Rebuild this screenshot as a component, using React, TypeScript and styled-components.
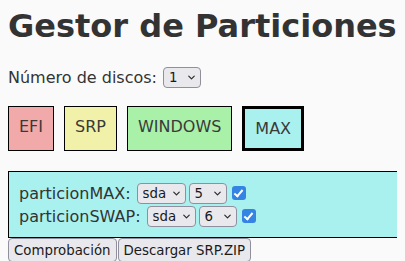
import { ChevronDown } from 'lucide-react';
import styled, { createGlobalStyle } from 'styled-components';

const partitions = [
  { name: 'EFI', color: '#f1a9a9', selected: false },
  { name: 'SRP', color: '#f1f1a9', selected: false },
  { name: 'WINDOWS', color: '#a9f1a9', selected: false },
  { name: 'MAX', color: '#a9f1ef', selected: true },
];

const rows = [
  { label: 'particionMAX:', disk: 'sda', num: '5' },
  { label: 'particionSWAP:', disk: 'sda', num: '6' },
];

const GlobalStyle = createGlobalStyle`
  html {
    overflow: hidden;
  }
  body {
    margin: 8px;
    background: #fafafa;
    color: #333;
    font-family: 'DejaVu Sans', 'Noto Sans', sans-serif;
    font-size: 16px;
  }
`;

const SelectWrap = ({ value, options, width }: { value: string; options: string[]; width: number }) => (
  <SelectBox style={{ width }}>
    <Select defaultValue={value}>
      {options.map((o) => (
        <option key={o}>{o}</option>
      ))}
    </Select>
    <Chevron size={11} strokeWidth={2.6} />
  </SelectBox>
);

const App = () => {
  return (
    <>
      <GlobalStyle />
      <Title>Gestor de Particiones</Title>
      <DiscRow>
        Número de discos:
        <SelectWrap value='1' options={['1', '2', '3']} width={38} />
      </DiscRow>
      <PartList>
        {partitions.map((p) => (
          <Part key={p.name} $color={p.color} $selected={p.selected}>
            {p.name}
          </Part>
        ))}
      </PartList>
      <Panel>
        {rows.map((r) => (
          <Row key={r.label}>
            <Label>{r.label}</Label>
            <SelectWrap value={r.disk} options={['sda', 'sdb']} width={49} />
            <SelectWrap value={r.num} options={['1', '2', '3', '4', '5', '6', '7']} width={38} />
            <Check type='checkbox' defaultChecked />
          </Row>
        ))}
      </Panel>
      <Actions>
        <Button>Comprobación</Button>
        <Button>Descargar SRP.ZIP</Button>
      </Actions>
    </>
  );
};

const Title = styled.h1`
  margin: 0;
  font-size: 32px;
  font-weight: 700;
  line-height: 37px;
`;

const DiscRow = styled.div`
  display: flex;
  align-items: center;
  gap: 6px;
  margin-top: 21px;
  height: 22px;
`;

const SelectBox = styled.span`
  position: relative;
  display: inline-flex;
  height: 21px;
`;

const Select = styled.select`
  appearance: none;
  width: 100%;
  height: 100%;
  margin: 0;
  padding: 0 0 0 5px;
  font-family: 'DejaVu Sans', sans-serif;
  font-size: 13.33px;
  color: #1a1a1a;
  background: #e9e9ed;
  border: 1px solid #8f8f9d;
  border-radius: 4px;
`;

const Chevron = styled(ChevronDown)`
  position: absolute;
  right: 4px;
  top: 5px;
  color: #2b2b2b;
  pointer-events: none;
`;

const PartList = styled.div`
  display: flex;
  gap: 10px;
  margin-top: 18px;
`;

const Part = styled.div<{ $color: string; $selected: boolean }>`
  box-sizing: border-box;
  height: 45px;
  padding: 10px 10px;
  line-height: 20px;
  background: ${(p) => p.$color};
  border: ${(p) => (p.$selected ? '3px' : '1px')} solid #000;
  color: #3a3a3a;
`;

const Panel = styled.div`
  margin-top: 20px;
  width: 100%;
  padding: 10px;
  background: #a9f1ef;
  border: 1px solid #000;
  display: flex;
  flex-direction: column;
  gap: 1px;
`;

const Row = styled.div`
  display: flex;
  align-items: center;
  gap: 3px;
  height: 22px;
`;

const Label = styled.span`
  margin-right: 3px;
`;

const Check = styled.input`
  appearance: none;
  position: relative;
  box-sizing: border-box;
  width: 14px;
  height: 14px;
  margin: 0 0 0 2px;
  background: #3584e4;
  border-radius: 3px;

  &::after {
    content: '';
    position: absolute;
    left: 4.5px;
    top: 1.5px;
    width: 3px;
    height: 7px;
    border: solid #fff;
    border-width: 0 2px 2px 0;
    transform: rotate(40deg);
  }
`;

const Actions = styled.div`
  display: flex;
  gap: 1px;
`;

const Button = styled.button`
  font-family: 'DejaVu Sans', sans-serif;
  font-size: 13.33px;
  color: #1a1a1a;
  background: #e9e9ed;
  border: 1px solid #8f8f9d;
  border-radius: 4px;
  padding: 2px 5px;
  height: 24px;
`;

export default App;
